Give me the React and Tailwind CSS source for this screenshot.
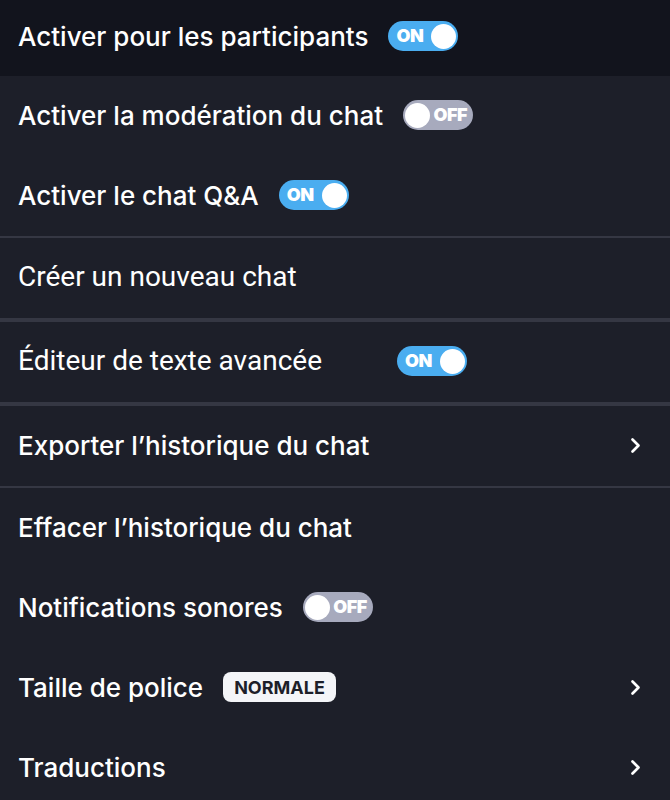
import React from "react";

const inter = { fontFamily: "Inter, 'Noto Sans', sans-serif" };

function Toggle({ on }) {
  if (on) {
    return (
      <div className="ml-5 flex h-[30px] w-[70px] shrink-0 items-center justify-between rounded-full bg-[#4aadf0] pl-[8px] pr-[2px]">
        <span className="text-[18px] font-black leading-none tracking-tight text-white" style={inter}>ON</span>
        <span className="h-[25px] w-[25px] rounded-full bg-white" />
      </div>
    );
  }
  return (
    <div className="ml-5 flex h-[30px] w-[70px] shrink-0 items-center justify-between rounded-full bg-[#a7aabd] pl-[2px] pr-[6px]">
      <span className="h-[25px] w-[25px] rounded-full bg-white" />
      <span className="text-[18px] font-black leading-none tracking-tight text-white" style={inter}>OFF</span>
    </div>
  );
}

function Chevron() {
  return (
    <svg className="ml-auto mr-[29px]" width="11" height="17" viewBox="0 0 11 17" fill="none">
      <path d="M2.5 2.5 L8.5 8.5 L2.5 14.5" stroke="white" strokeWidth="2.7" strokeLinecap="round" strokeLinejoin="round" />
    </svg>
  );
}

function Row({ children, label, roboto, className = "h-[80px] bg-[#1d1f29] pb-[2px]" }) {
  return (
    <div className={`flex items-center pl-[18px] ${className}`}>
      <span
        className={`text-white ${roboto ? "text-[28px] font-normal" : "text-[26px] font-medium"}`}
        style={roboto ? { fontFamily: "Roboto, sans-serif" } : inter}
      >
        {label}
      </span>
      {children}
    </div>
  );
}

const Sep = ({ h }) => <div className={`${h} bg-[#353743]`} />;

export default function App() {
  return (
    <div className="h-[800px] w-[670px] overflow-hidden bg-[#1d1f29]">
      <Row label="Activer pour les participants" className="h-[76px] bg-[#12141d] pb-[4px]">
        <Toggle on />
      </Row>
      <Row label="Activer la modération du chat">
        <Toggle on={false} />
      </Row>
      <Row label="Activer le chat Q&A">
        <Toggle on />
      </Row>
      <Sep h="h-[2px]" />
      <Row label="Créer un nouveau chat" roboto />
      <Sep h="h-[4px]" />
      <Row label="Éditeur de texte avancée" roboto>
        <div className="ml-[55px] flex">
          <Toggle on />
        </div>
      </Row>
      <Sep h="h-[4px]" />
      <Row label="Exporter l’historique du chat">
        <Chevron />
      </Row>
      <Sep h="h-[2px]" />
      <Row label="Effacer l’historique du chat" />
      <Row label="Notifications sonores">
        <Toggle on={false} />
      </Row>
      <Row label="Taille de police">
        <span
          className="ml-5 flex h-[30px] items-center rounded-[8px] bg-[#f4f5f8] px-[11px] text-[18px] font-bold text-[#1d1f29]"
          style={inter}
        >
          NORMALE
        </span>
        <Chevron />
      </Row>
      <Row label="Traductions">
        <Chevron />
      </Row>
    </div>
  );
}
